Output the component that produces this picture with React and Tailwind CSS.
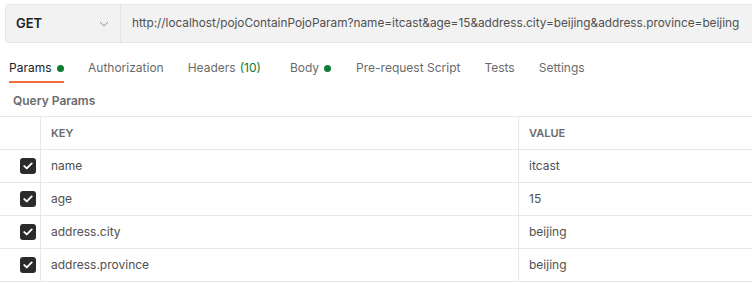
import React from 'react';

const rows = [
  { key: 'name', value: 'itcast' },
  { key: 'age', value: '15' },
  { key: 'address.city', value: 'beijing' },
  { key: 'address.province', value: 'beijing' },
];

const tabs = [
  { label: 'Authorization', x: 'ml-[24px]' },
  { label: 'Headers', x: 'ml-[24px]', extra: '(10)' },
  { label: 'Body', x: 'ml-[29px]', dot: true },
  { label: 'Pre-request Script', x: 'ml-[25px]' },
  { label: 'Tests', x: 'ml-[24px]' },
  { label: 'Settings', x: 'ml-[24px]' },
];

function Check() {
  return (
    <span className="flex h-[16px] w-[16px] items-center justify-center rounded-[3px] bg-[#2b2b2b]">
      <svg width="10" height="8" viewBox="0 0 10 8" fill="none">
        <path d="M1.3 4.1 L3.8 6.4 L8.7 1.4" stroke="#fff" strokeWidth="1.9" strokeLinecap="round" strokeLinejoin="round" />
      </svg>
    </span>
  );
}

export default function App() {
  return (
    <div className="h-[283px] w-[752px] overflow-hidden bg-white font-['Inter','Liberation_Sans',sans-serif] text-[12px]">
      <div className="ml-[5px] mt-[4px] flex h-[39px] w-[780px] shrink-0 rounded-[4px] border border-[#e6e6e6] bg-[#f2f2f2]">
        <div className="flex w-[115px] shrink-0 items-center justify-between border-r border-[#e3e3e3] pl-[10px] pr-[11px]">
          <span className="text-[13px] font-semibold text-[#212121]">GET</span>
          <svg width="10" height="6" viewBox="0 0 10 6" fill="none">
            <path d="M1 1 L5 5 L9 1" stroke="#8a8a8a" strokeWidth="1" />
          </svg>
        </div>
        <div className="flex items-center whitespace-nowrap pl-[11px] text-[11.8px] text-[#505050]">
          http://localhost/pojoContainPojoParam?name=itcast&amp;age=15&amp;address.city=beijing&amp;address.province=beijing
        </div>
      </div>

      <div className="mt-[13px] flex h-[28px] items-start pl-[9px]">
        <div className="flex h-[28px] flex-col">
          <div className="flex h-[24px] items-center">
            <span className="text-[#212121]">Params</span>
            <span className="ml-[5px] h-[7px] w-[7px] rounded-full bg-[#0c7d33]" />
          </div>
          <div className="mt-[1px] h-[2px] w-[55px] bg-[#f26b3a]" />
        </div>
        {tabs.map((t) => (
          <div key={t.label} className={`flex h-[24px] items-center text-[#6b6b6b] ${t.x}`}>
            <span>{t.label}</span>
            {t.extra && <span className="ml-[4px] text-[#0c7d33]">{t.extra}</span>}
            {t.dot && <span className="ml-[5px] h-[7px] w-[7px] rounded-full bg-[#0c7d33]" />}
          </div>
        ))}
      </div>

      <div className="mt-[8px] pl-[13px] text-[12px] font-semibold text-[#6b6b6b]">Query Params</div>

      <div className="mt-[6px] border-t border-[#e8e8e8]">
        <div className="flex h-[33px] border-b border-[#e8e8e8] text-[11px] font-semibold text-[#6b6b6b]">
          <div className="w-[41px] border-r border-[#e8e8e8]" />
          <div className="flex w-[478px] items-center border-r border-[#e8e8e8] pl-[10px]">KEY</div>
          <div className="flex flex-1 items-center pl-[10px]">VALUE</div>
        </div>
        {rows.map((r) => (
          <div key={r.key} className="flex h-[33px] border-b border-[#e8e8e8] text-[#505050]">
            <div className="flex w-[41px] items-center justify-end border-r border-[#e8e8e8] pr-[4px]">
              <Check />
            </div>
            <div className="flex w-[478px] items-center border-r border-[#e8e8e8] pl-[10px]">{r.key}</div>
            <div className="flex flex-1 items-center pl-[10px]">{r.value}</div>
          </div>
        ))}
      </div>
    </div>
  );
}
